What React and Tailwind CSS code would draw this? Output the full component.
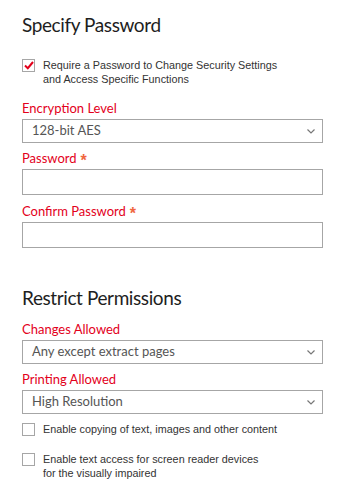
import { useState } from "react";

const ui = { fontFamily: 'Lato, "Open Sans", sans-serif' };
const arial = { fontFamily: '"Liberation Sans", Arial, sans-serif' };

function Label({ children, required }) {
  return (
    <div className="flex h-[18px] items-center text-[13px] leading-[18px] text-[#e3001b]" style={ui}>
      {children}
      {required && (
        <span className="ml-[4px] pt-[5px] text-[16px] font-bold leading-none text-[#f0663f]" style={arial}>
          *
        </span>
      )}
    </div>
  );
}

function Select({ value }) {
  return (
    <div className="mt-[2px] flex h-[24px] w-[301px] items-center justify-between border border-[#a6a6a6] bg-white pl-[9px] pr-[7px]">
      <span className="text-[13px] text-[#555]" style={ui}>
        {value}
      </span>
      <svg width="8" height="5" viewBox="0 0 8 5">
        <path d="M0.5 0.5 L4 4 L7.5 0.5" fill="none" stroke="#777" strokeWidth="1.2" />
      </svg>
    </div>
  );
}

function Input() {
  return <div className="mt-[2px] h-[26px] w-[301px] border border-[#a6a6a6] bg-white" />;
}

function Check({ checked, children }) {
  return (
    <div className="flex items-start gap-[8px]">
      <div className="mt-[1px] flex h-[13px] w-[13px] shrink-0 items-center justify-center border border-[#a6a6a6] bg-white">
        {checked && (
          <svg width="10" height="9" viewBox="0 0 10 9">
            <path d="M1 4.5 L3.8 7.2 L9 1" fill="none" stroke="#e3001b" strokeWidth="2" />
          </svg>
        )}
      </div>
      <div className="text-[10.8px] leading-[14px] text-[#333]" style={arial}>
        {children}
      </div>
    </div>
  );
}

export default function App() {
  const [enc] = useState("128-bit AES");

  return (
    <div className="h-[490px] w-[356px] bg-white pl-[22px]">
      <h1 className="h-[26px] pt-[12px] box-content text-[19px] leading-[26px] tracking-[-0.4px] text-[#1e1e1e]" style={ui}>
        Specify Password
      </h1>

      <div className="mt-[20px]">
        <Check checked>
          Require a Password to Change Security Settings
          <br />
          and Access Specific Functions
        </Check>
      </div>

      <div className="mt-[13px]">
        <Label>Encryption Level</Label>
        <Select value={enc} />
      </div>

      <div className="mt-[6px]">
        <Label required>Password</Label>
        <Input />
      </div>

      <div className="mt-[7px]">
        <Label required>Confirm Password</Label>
        <Input />
      </div>

      <h2 className="mt-[37px] h-[26px] text-[19px] leading-[26px] tracking-[-0.4px] text-[#1e1e1e]" style={ui}>
        Restrict Permissions
      </h2>

      <div className="mt-[9px]">
        <Label>Changes Allowed</Label>
        <Select value="Any except extract pages" />
      </div>

      <div className="mt-[6px]">
        <Label>Printing Allowed</Label>
        <Select value="High Resolution" />
      </div>

      <div className="mt-[8px]">
        <Check>Enable copying of text, images and other content</Check>
      </div>

      <div className="mt-[16px]">
        <Check>
          Enable text access for screen reader devices
          <br />
          for the visually impaired
        </Check>
      </div>
    </div>
  );
}
